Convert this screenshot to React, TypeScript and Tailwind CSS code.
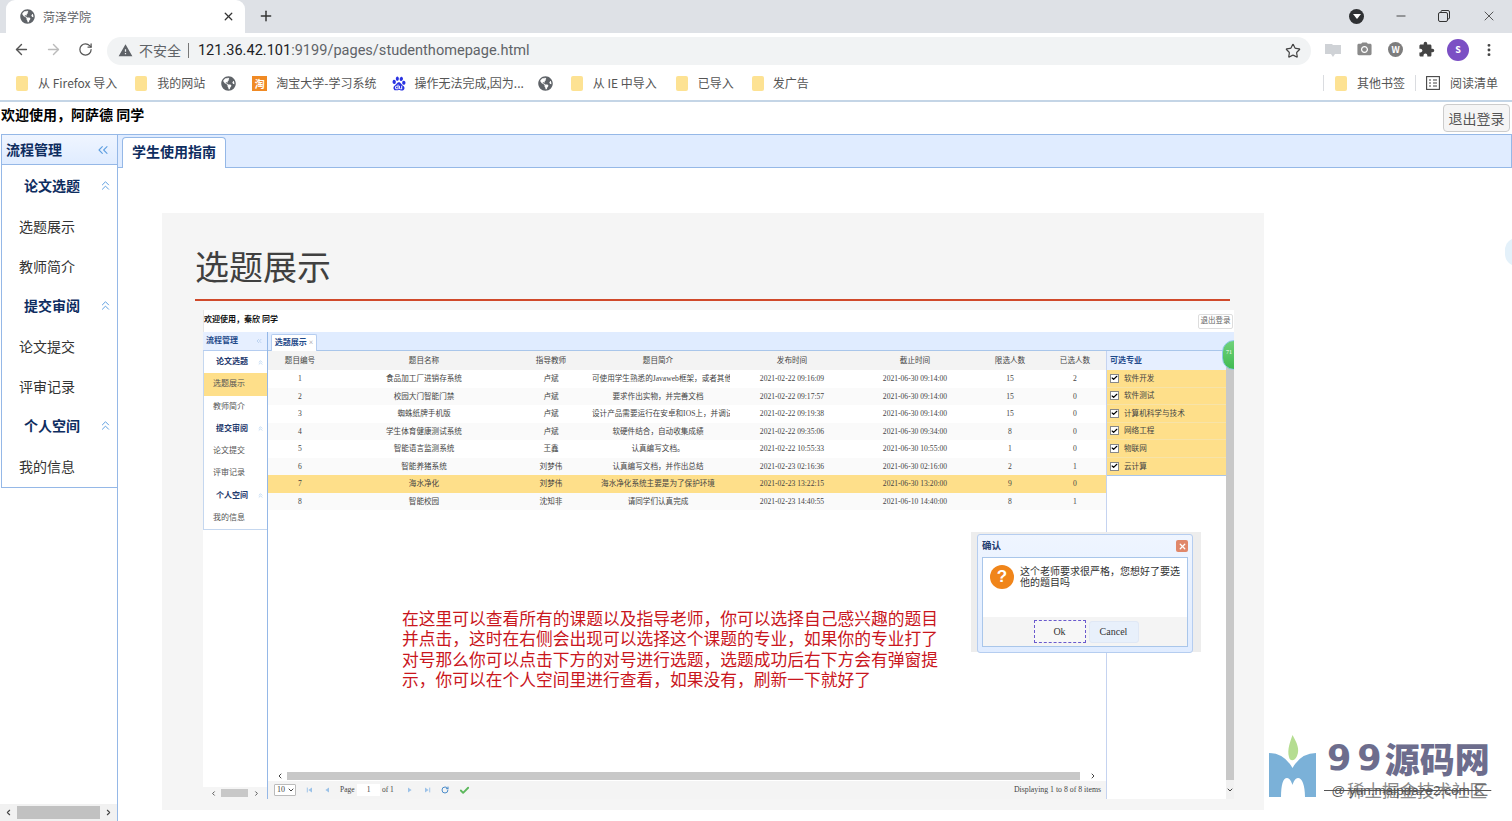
import React from 'react';
import { ArrowLeft, ArrowRight, ChevronDown, ChevronLeft, ChevronRight, ChevronsLeft, ChevronsUp, Check, Minus, MoreVertical, Plus, RotateCw, Star, X } from 'lucide-react';
import { FaGlobeAmericas } from 'react-icons/fa';
import { MdExtension, MdPhotoCamera, MdWarning } from 'react-icons/md';
import { SiBaidu } from 'react-icons/si';

const rows = [
  ['1', '食品加工厂进销存系统', '卢斌', '可使用学生熟悉的Javaweb框架，或者其他技术', '2021-02-22 09:16:09', '2021-06-30 09:14:00', '15', '2'],
  ['2', '校园大门智能门禁', '卢斌', '要求作出实物，并完善文档', '2021-02-22 09:17:57', '2021-06-30 09:14:00', '15', '0'],
  ['3', '蜘蛛纸牌手机版', '卢斌', '设计产品需要运行在安卓和IOS上，并调试通过', '2021-02-22 09:19:38', '2021-06-30 09:14:00', '15', '0'],
  ['4', '学生体育健康测试系统', '卢斌', '软硬件结合，自动收集成绩', '2021-02-22 09:35:06', '2021-06-30 09:34:00', '8', '0'],
  ['5', '智能语言监测系统', '王鑫', '认真编写文档。', '2021-02-22 10:55:33', '2021-06-30 10:55:00', '1', '0'],
  ['6', '智能养猪系统', '刘梦伟', '认真编写文档，并作出总结', '2021-02-23 02:16:36', '2021-06-30 02:16:00', '2', '1'],
  ['7', '海水净化', '刘梦伟', '海水净化系统主要是为了保护环境', '2021-02-23 13:22:15', '2021-06-30 13:20:00', '9', '0'],
  ['8', '智能校园', '沈知非', '请同学们认真完成', '2021-02-23 14:40:55', '2021-06-10 14:40:00', '8', '1'],
];

const headers = ['题目编号', '题目名称', '指导教师', '题目简介', '发布时间', '截止时间', '限选人数', '已选人数'];
const majors = ['软件开发', '软件测试', '计算机科学与技术', '网络工程', '物联网', '云计算'];
const noteLines = [
  '在这里可以查看所有的课题以及指导老师，你可以选择自己感兴趣的题目',
  '并点击，这时在右侧会出现可以选择这个课题的专业，如果你的专业打了',
  '对号那么你可以点击下方的对号进行选题，选题成功后右下方会有弹窗提',
  '示，你可以在个人空间里进行查看，如果没有，刷新一下就好了',
];

const Folder = () => <div className="w-[12px] h-[15px] rounded-[2px] bg-[#fde293] shrink-0" />;

const Globe = () => <FaGlobeAmericas className="w-[15px] h-[15px] text-[#5f6368] shrink-0" />;

const Bookmark = ({ label, icon, gap = 'mr-[18px]', inner = 'gap-[10px]' }: { label: string; icon: React.ReactNode; gap?: string; inner?: string }) => (
  <div className={`flex items-center ${inner} ${gap}`}>
    {icon}
    <span className="text-[12px] text-[#555] whitespace-nowrap">{label}</span>
  </div>
);

const Triangle = ({ left, bar }: { left?: boolean; bar?: boolean }) => (
  <svg viewBox="0 0 10 10" className="w-[8px] h-[8px] text-[#9cc2e8]" fill="currentColor">
    {left ? <path d="M7.5 2 L3 5 L7.5 8 Z" /> : <path d="M2.5 2 L7 5 L2.5 8 Z" />}
    {bar && (left ? <rect x="1" y="2" width="1.2" height="6" /> : <rect x="7.8" y="2" width="1.2" height="6" />)}
  </svg>
);

export default function App() {
  return (
    <div className="w-[1512px] h-[821px] overflow-hidden relative bg-white flex flex-col font-['Noto_Sans_CJK_SC','Noto_Sans',sans-serif]">
      {/* 标签栏 */}
      <div className="h-[33px] bg-[#dee1e6] flex items-end shrink-0 pl-[6px]">
        <div className="w-[239px] h-[33px] bg-white rounded-t-[9px] flex items-center pl-[14px] pr-[10px]">
          <Globe />
          <span className="ml-[8px] text-[12px] text-[#5f6368]">菏泽学院</span>
          <X className="w-[13px] h-[13px] ml-auto text-[#333]" strokeWidth={2.4} />
        </div>
        <Plus className="w-[16px] h-[16px] ml-[13px] mb-[9px] text-[#333]" strokeWidth={2.2} />
        <div className="ml-auto flex items-center h-[33px] pr-[15px] -translate-y-[1px]">
          <div className="w-[15px] h-[15px] rounded-full bg-[#2f3134] flex items-center justify-center mr-[30px] translate-y-[1px]">
            <div className="w-0 h-0 border-x-[4px] border-x-transparent border-t-[5px] border-t-white" />
          </div>
          <Minus className="w-[14px] h-[14px] text-[#333] mr-[30px]" strokeWidth={1.5} />
          <svg viewBox="0 0 12 12" className="w-[12px] h-[12px] mr-[31px] text-[#333]" fill="none" stroke="currentColor" strokeWidth="1">
            <rect x="0.5" y="2.5" width="9" height="9" rx="1.5" />
            <path d="M3 2.5 V1.5 Q3 0.5 4 0.5 H10 Q11.5 0.5 11.5 2 V8 Q11.5 9 10 9" />
          </svg>
          <X className="w-[16px] h-[16px] text-[#333]" strokeWidth={1.2} />
        </div>
      </div>

      {/* 地址栏 */}
      <div className="h-[33px] bg-white flex items-center shrink-0 pl-[13px] pr-[15px]">
        <ArrowLeft className="w-[17px] h-[17px] text-[#555]" strokeWidth={2} />
        <ArrowRight className="w-[17px] h-[17px] ml-[15px] text-[#bbb]" strokeWidth={2} />
        <RotateCw className="w-[15px] h-[15px] ml-[16px] text-[#555]" strokeWidth={2} />
        <div className="ml-[14px] w-[1207px] h-[28px] bg-[#f1f3f4] rounded-full flex items-center pl-[11px] pr-[10px] translate-y-[1px]">
          <MdWarning className="w-[15px] h-[15px] text-[#5f6368]" />
          <span className="ml-[6px] text-[14px] text-[#5f6368]">不安全</span>
          <span className="ml-[7px] w-px h-[15px] bg-[#777]" />
          <span className="ml-[9px] text-[14.55px] text-[#5f6368] font-['Roboto',sans-serif]"><span className="text-[#202124]">121.36.42.101</span>:9199/pages/studenthomepage.html</span>
          <Star className="w-[16px] h-[16px] ml-auto text-[#444]" strokeWidth={1.8} />
        </div>
        <svg viewBox="0 0 16 16" className="w-[16px] h-[16px] ml-[14px]" fill="#cfd2d6">
          <path d="M0 2 H7 L8 3 H16 V12 H10 L8 15 L6 12 H0 Z" />
        </svg>
        <MdPhotoCamera className="w-[17px] h-[17px] ml-[15px] text-[#8a8a8a]" />
        <div className="w-[15px] h-[15px] ml-[15px] rounded-full bg-[#7d7d7d] text-white text-[9px] font-bold flex items-center justify-center">W</div>
        <MdExtension className="w-[17px] h-[17px] ml-[15px] text-[#444]" />
        <div className="w-[22px] h-[22px] ml-[12px] rounded-full bg-[#7b4fc4] text-white text-[9px] font-semibold flex items-center justify-center">S</div>
        <MoreVertical className="w-[16px] h-[16px] ml-[12px] text-[#444]" strokeWidth={2.4} />
      </div>

      {/* 书签栏 */}
      <div className="h-[34px] bg-white flex items-center shrink-0 pl-[16px] pr-[14px]">
        <Bookmark icon={<Folder />} label="从 Firefox 导入" />
        <Bookmark icon={<Folder />} label="我的网站" gap="mr-[16px]" />
        <div className="mr-[16px]"><Globe /></div>
        <Bookmark
          icon={<div className="w-[15px] h-[15px] bg-[#f08a24] text-white text-[10px] font-bold flex items-center justify-center">淘</div>}
          label="淘宝大学-学习系统"
          gap="mr-[16px]"
          inner="gap-[9px]"
        />
        <Bookmark icon={<SiBaidu className="w-[14px] h-[15px] text-[#2932e1]" />} label="操作无法完成,因为..." gap="mr-[14px]" inner="gap-[8px]" />
        <div className="mr-[18px]"><Globe /></div>
        <Bookmark icon={<Folder />} label="从 IE 中导入" gap="mr-[19px]" />
        <Bookmark icon={<Folder />} label="已导入" />
        <Bookmark icon={<Folder />} label="发广告" gap="" inner="gap-[9px]" />
        <div className="ml-auto flex items-center">
          <span className="w-px h-[16px] bg-[#dadce0] mr-[11px]" />
          <Bookmark icon={<Folder />} label="其他书签" gap="mr-[10px]" />
          <span className="w-px h-[16px] bg-[#dadce0] mr-[10px]" />
          <Bookmark
            icon={
              <svg viewBox="0 0 14 14" className="w-[14px] h-[14px]" fill="none" stroke="#444" strokeWidth="1.1">
                <rect x="0.6" y="0.6" width="12.8" height="12.8" />
                <path d="M3 4 H5 M3 7 H5 M3 10 H5 M7 4 H11 M7 7 H11 M7 10 H11" />
              </svg>
            }
            label="阅读清单"
            gap=""
          />
        </div>
      </div>

      {/* 页面头部 */}
      <div className="h-[34px] shrink-0 border-t-2 border-[#c4d5e6] flex items-center justify-between pr-[2px] pl-px">
        <span className="text-[14px] font-bold text-black -translate-y-[4px]">欢迎使用，阿萨德 同学</span>
        <button className="w-[67px] h-[28px] rounded-[4px] border border-[#ccc] bg-[#f5f5f5] text-[14px] text-[#555]">退出登录</button>
      </div>

      <div className="flex-1 flex min-h-0">
        {/* 左侧菜单 */}
        <aside className="w-[118px] shrink-0 border-r border-[#95b8e7] flex flex-col relative pl-px">
          <div className="h-[31px] border border-r-0 border-[#95b8e7] bg-gradient-to-b from-[#eff5ff] to-[#e0ecff] flex items-center justify-between pl-[4px] pr-[6px]">
            <span className="text-[14px] font-bold text-[#0e2d5f]">流程管理</span>
            <ChevronsLeft className="w-[16px] h-[16px] text-[#5f9fe0]" strokeWidth={1.6} />
          </div>
          <div className="h-[323px] border-l border-b border-[#95b8e7] flex flex-col">
            {[
              ['论文选题', true], ['选题展示', false], ['教师简介', false], ['提交审阅', true],
              ['论文提交', false], ['评审记录', false], ['个人空间', true], ['我的信息', false],
            ].map(([label, group]) =>
              group ? (
                <div key={label as string} className="h-[40px] flex items-center justify-between pl-[22px] pr-[4px]">
                  <span className="text-[14px] font-bold text-[#0e2d5f]">{label}</span>
                  <ChevronsUp className="w-[15px] h-[15px] text-[#5f9fe0]" strokeWidth={1.6} />
                </div>
              ) : (
                <div key={label as string} className="h-[40px] flex items-center pl-[17px] pt-[2px] text-[14px] text-[#333]">{label}</div>
              )
            )}
          </div>
          <div className="absolute left-0 right-0 bottom-0 h-[17px] bg-[#f1f1f1] flex items-center justify-between px-[4px]">
            <ChevronLeft className="w-[9px] h-[9px] text-[#444]" strokeWidth={3} />
            <div className="absolute left-[17px] w-[83px] h-[13px] bg-[#c1c1c1]" />
            <ChevronRight className="w-[9px] h-[9px] text-[#444]" strokeWidth={3} />
          </div>
        </aside>

        <main className="flex-1 min-w-0 flex flex-col">
          {/* 标签页 */}
          <div className="h-[34px] shrink-0 bg-[#e0ecff] border-t border-r border-b border-[#95b8e7] pl-[4px] flex items-end">
            <div className="w-[104px] h-[31px] -mb-px bg-white border border-b-0 border-[#95b8e7] rounded-t-[4px] flex items-center justify-center pb-[3px] text-[14px] font-bold text-[#0e2d5f]">学生使用指南</div>
          </div>

          {/* 说明截图 */}
          <div className="flex-1 pt-[45px] pl-[44px]">
            <div className="w-[1102px] h-[597px] bg-[#f5f5f5] flex flex-col">
              <h1 className="ml-[33px] mt-[28px] h-[50px] leading-[50px] text-[34px] text-[#404040] font-normal">选题展示</h1>
              <div className="ml-[33px] mt-[8px] w-[1035px] h-[2px] bg-[#d0492a]" />
              <div className="ml-[41px] mt-[9px] w-[1031px] h-[489px] bg-white flex flex-col relative overflow-hidden font-['Liberation_Serif','Noto_Sans_CJK_SC',serif]">
                <div className="h-[22px] shrink-0 flex items-center justify-between border-l border-[#e5e5e5] pr-px">
                  <span className="text-[8px] font-bold text-[#111] translate-y-[-1px]">欢迎使用，秦欣 同学</span>
                  <div className="w-[35px] h-[15px] border border-[#ddd] rounded-[2px] text-[7.5px] text-[#666] flex items-center justify-center">退出登录</div>
                </div>
                <div className="flex-1 flex min-h-0">
                  {/* 内层菜单 */}
                  <div className="w-[65px] shrink-0 border-r border-[#95b8e7] flex flex-col">
                    <div className="h-[19px] shrink-0 bg-[#e6efff] border-b border-[#b5cdf0] flex items-center justify-between pl-[3px] pr-[4px]">
                      <span className="text-[8px] font-bold text-[#1f4a8a]">流程管理</span>
                      <ChevronsLeft className="w-[8px] h-[8px] text-[#a9c6ea]" />
                    </div>
                    <div className="h-[179px] shrink-0 border-b border-[#c5d7ef] border-l flex flex-col">
                      {[
                        ['论文选题', 'g'], ['选题展示', 'a'], ['教师简介', ''], ['提交审阅', 'g'],
                        ['论文提交', ''], ['评审记录', ''], ['个人空间', 'g'], ['我的信息', ''],
                      ].map(([label, kind]) => (
                        <div
                          key={label}
                          className={`h-[22.3px] flex items-center justify-between text-[8px] ${kind === 'g' ? 'pl-[12px] pr-[3px] font-bold text-[#1f3a6e]' : 'pl-[9px] text-[#555]'} ${kind === 'a' ? 'bg-[#fedf8a]' : ''}`}
                        >
                          <span>{label}</span>
                          {kind === 'g' && <ChevronsUp className="w-[7px] h-[7px] text-[#9dc3ea]" />}
                        </div>
                      ))}
                    </div>
                    <div className="mt-auto h-[12px] bg-[#f5f5f5] flex items-center justify-between px-[7px] relative">
                      <ChevronLeft className="w-[7px] h-[7px] text-[#444]" strokeWidth={3} />
                      <div className="absolute left-[18px] w-[27px] h-[8px] bg-[#c8c8c8]" />
                      <ChevronRight className="w-[7px] h-[7px] text-[#444]" strokeWidth={3} />
                    </div>
                  </div>

                  <div className="flex-1 min-w-0 flex flex-col">
                    <div className="h-[19px] shrink-0 bg-[#e0ecff] border-b border-[#a9c6ea] pl-[3px] flex items-end">
                      <div className="w-[46px] h-[17px] -mb-px bg-white border border-b-0 border-[#b5cdf0] rounded-t-[2px] flex items-center justify-center text-[8px] font-bold text-[#1f4a8a]">选题展示<span className="ml-[2px] font-normal text-[#999]">×</span></div>
                    </div>
                    <div className="flex-1 flex min-h-0">
                      {/* 课题表格 */}
                      <div className="w-[838px] shrink-0 flex flex-col">
                        <div className="h-[19px] shrink-0 bg-[#f3f3f3] grid grid-cols-[64px_184px_70px_144px_124px_122px_68px_62px] items-center text-center text-[7.6px] text-[#444]">
                          {headers.map(h => <span key={h}>{h}</span>)}
                        </div>
                        {rows.map((r, i) => (
                          <div
                            key={r[0]}
                            className={`h-[17.5px] shrink-0 grid grid-cols-[64px_184px_70px_144px_124px_122px_68px_62px] items-center text-center text-[7.6px] text-[#444] ${r[0] === '7' ? 'bg-[#fedf8a]' : i % 2 ? 'bg-[#fafafa]' : 'bg-white'}`}
                          >
                            {r.map((c, j) => (
                              <span key={j} className={j === 3 && (r[0] === '1' || r[0] === '3') ? 'pl-[6px] text-left whitespace-nowrap overflow-hidden' : 'whitespace-nowrap overflow-hidden'}>{c}</span>
                            ))}
                          </div>
                        ))}
                        <div className="flex-1" />
                        <div className="h-[11px] shrink-0 flex items-center pl-[8px] pr-[9px]">
                          <ChevronLeft className="w-[8px] h-[8px] text-[#444]" strokeWidth={3} />
                          <div className="flex-1 h-[8px] bg-[#c8c8c8] mx-[3px]" />
                          <div className="w-[6px]" />
                          <ChevronRight className="w-[8px] h-[8px] text-[#444]" strokeWidth={3} />
                        </div>
                        <div className="h-[18px] shrink-0 bg-[#f4f4f4] flex items-center pl-[6px] pr-[5px] text-[7.5px] text-[#444]">
                          <div className="w-[22px] h-[12px] bg-white border border-[#bbb] rounded-[1px] flex items-center justify-between pl-[2px] text-[8px]">
                            10<ChevronDown className="w-[8px] h-[8px]" strokeWidth={3} />
                          </div>
                          <div className="ml-[10px]"><Triangle left bar /></div>
                          <div className="ml-[9px]"><Triangle left /></div>
                          <span className="ml-[9px] w-[17px]">Page</span>
                          <div className="w-[23px] h-[12px] bg-white flex items-center justify-center">1</div>
                          <span className="ml-[2px] w-[18px]">of 1</span>
                          <div className="ml-[6px]"><Triangle /></div>
                          <div className="ml-[9px]"><Triangle bar /></div>
                          <RotateCw className="ml-[10px] w-[8px] h-[8px] text-[#4a8bc9]" strokeWidth={3} />
                          <Check className="ml-[10px] w-[11px] h-[11px] text-[#5cb85c]" strokeWidth={4} />
                          <span className="ml-auto text-[7.8px] whitespace-nowrap">Displaying 1 to 8 of 8 items</span>
                        </div>
                      </div>

                      {/* 可选专业 */}
                      <div className="flex-1 min-w-0 border-l border-[#c5d3f0] flex">
                        <div className="flex-1 min-w-0 flex flex-col">
                          <div className="h-[19px] shrink-0 bg-[#e6efff] flex items-center pl-[3px] text-[8px] font-bold text-[#1f4a8a]">可选专业</div>
                          <div className="bg-[#fedf8a] border-b border-[#a9c6ea]">
                            {majors.map(m => (
                              <div key={m} className="h-[17.5px] flex items-center pl-[3px] text-[7.6px] text-[#444] border-b border-[#f7e3a8] last:border-b-0">
                                <div className="w-[9px] h-[9px] bg-white border border-[#888] flex items-center justify-center">
                                  <Check className="w-[8px] h-[8px] text-black" strokeWidth={4} />
                                </div>
                                <span className="ml-[5px] whitespace-nowrap">{m}</span>
                              </div>
                            ))}
                          </div>
                        </div>
                        <div className="w-[8px] shrink-0 flex flex-col">
                          <div className="flex-1 bg-[#c8c8c8]" />
                          <div className="h-[19px] bg-[#f1f1f1] flex items-center justify-center">
                            <ChevronDown className="w-[8px] h-[8px] text-[#444]" strokeWidth={3} />
                          </div>
                        </div>
                      </div>
                    </div>
                  </div>
                </div>

                {/* 绿色悬浮球 */}
                <div className="absolute left-[1019px] top-[30px] w-[24px] h-[30px] rounded-full bg-gradient-to-b from-[#6fd27a] to-[#3fbb52] border border-[#8fc9e8] pl-[3px] pt-[7px] text-[6px] text-white">71</div>

                {/* 红色说明文字 */}
                <div className="absolute left-[199px] top-[298px] text-[16.75px] leading-[20.3px] text-[#c9161d] whitespace-nowrap font-['Noto_Sans_CJK_SC',sans-serif]">
                  {noteLines.map(line => <p key={line}>{line}</p>)}
                </div>

                {/* 确认弹窗 */}
                <div className="absolute left-[768px] top-[222px] w-[230px] h-[120px] bg-[#ededed] pl-[6px] pt-[2px]">
                  <div className="w-[216px] h-[119px] rounded-[3px] border border-[#b5cdf0] bg-gradient-to-b from-[#eff5ff] to-[#e0ecff] flex flex-col px-[4px] pb-[5px]">
                    <div className="h-[22px] shrink-0 flex items-center justify-between">
                      <span className="text-[9.5px] font-bold text-[#1f3a6e]">确认</span>
                      <div className="w-[12px] h-[12px] rounded-[2px] bg-[#e0876a] text-white flex items-center justify-center">
                        <X className="w-[9px] h-[9px]" strokeWidth={3.5} />
                      </div>
                    </div>
                    <div className="flex-1 bg-white border border-[#a9c6ea] flex flex-col min-h-0">
                      <div className="flex-1 flex items-start pt-[7px] pl-[7px] pr-[6px]">
                        <div className="w-[24px] h-[24px] shrink-0 rounded-full bg-[#f0851a] text-white text-[17px] font-bold flex items-center justify-center font-['Liberation_Sans',sans-serif]">?</div>
                        <p className="ml-[6px] text-[10px] leading-[11px] text-[#333] font-['Noto_Sans_CJK_SC',sans-serif]">这个老师要求很严格，您想好了要选他的题目吗</p>
                      </div>
                      <div className="h-[29px] shrink-0 bg-[#f4f4f4] flex items-center justify-center gap-[3px] pl-[2px] text-[10px] text-[#333]">
                        <div className="w-[52px] h-[23px] bg-[#f7f7f7] border border-dashed border-[#6a5acd] flex items-center justify-center">Ok</div>
                        <div className="w-[50px] h-[22px] bg-[#e8f0fb] rounded-[3px] border border-[#e0e8f5] flex items-center justify-center">Cancel</div>
                      </div>
                    </div>
                  </div>
                </div>
              </div>
            </div>
          </div>
        </main>
      </div>

      {/* 右侧边缘浮标 */}
      <div className="absolute left-[1505px] top-[238px] w-[24px] h-[28px] rounded-full bg-[#e4f1fa]" />

      {/* 水印 */}
      <svg viewBox="0 0 47 63" className="absolute left-[1269px] top-[735px] w-[47px] h-[63px]">
        <path d="M23.5 0 C28 8 31 14 28 21 C26 26 21 27 20 22 C18 15 21 7 23.5 0 Z" fill="#b5dd91" />
        <path d="M0 18 Q15 18 23.5 33 Q32 18 47 18 V62 H36 C36 50 33 43 29 43 C26 43 24.5 47 23.5 50 C22.5 47 21 43 18 43 C14 43 12 50 12 62 H0 Z" fill="#7bb1d8" />
      </svg>
      <div className="absolute left-[1327px] top-[736px] h-[44px] flex items-center font-black text-[35px] text-[#6d6d8d] whitespace-nowrap">
        <span className="font-['DejaVu_Sans',sans-serif] font-bold tracking-[6px] mr-[-3px]">99</span>源码网
      </div>
      <div className="absolute left-[1347px] top-[780px] text-[17.5px] leading-[20px] text-[#8a8a8a] whitespace-nowrap">稀土掘金技术社区</div>
      <div className="absolute left-[1324px] top-[782px] text-[13.5px] leading-[18px] text-[#555] whitespace-nowrap font-['Liberation_Sans',sans-serif] line-through">&nbsp;&nbsp;@ yun.maipdaze2.com 匚&nbsp;</div>
    </div>
  );
}
